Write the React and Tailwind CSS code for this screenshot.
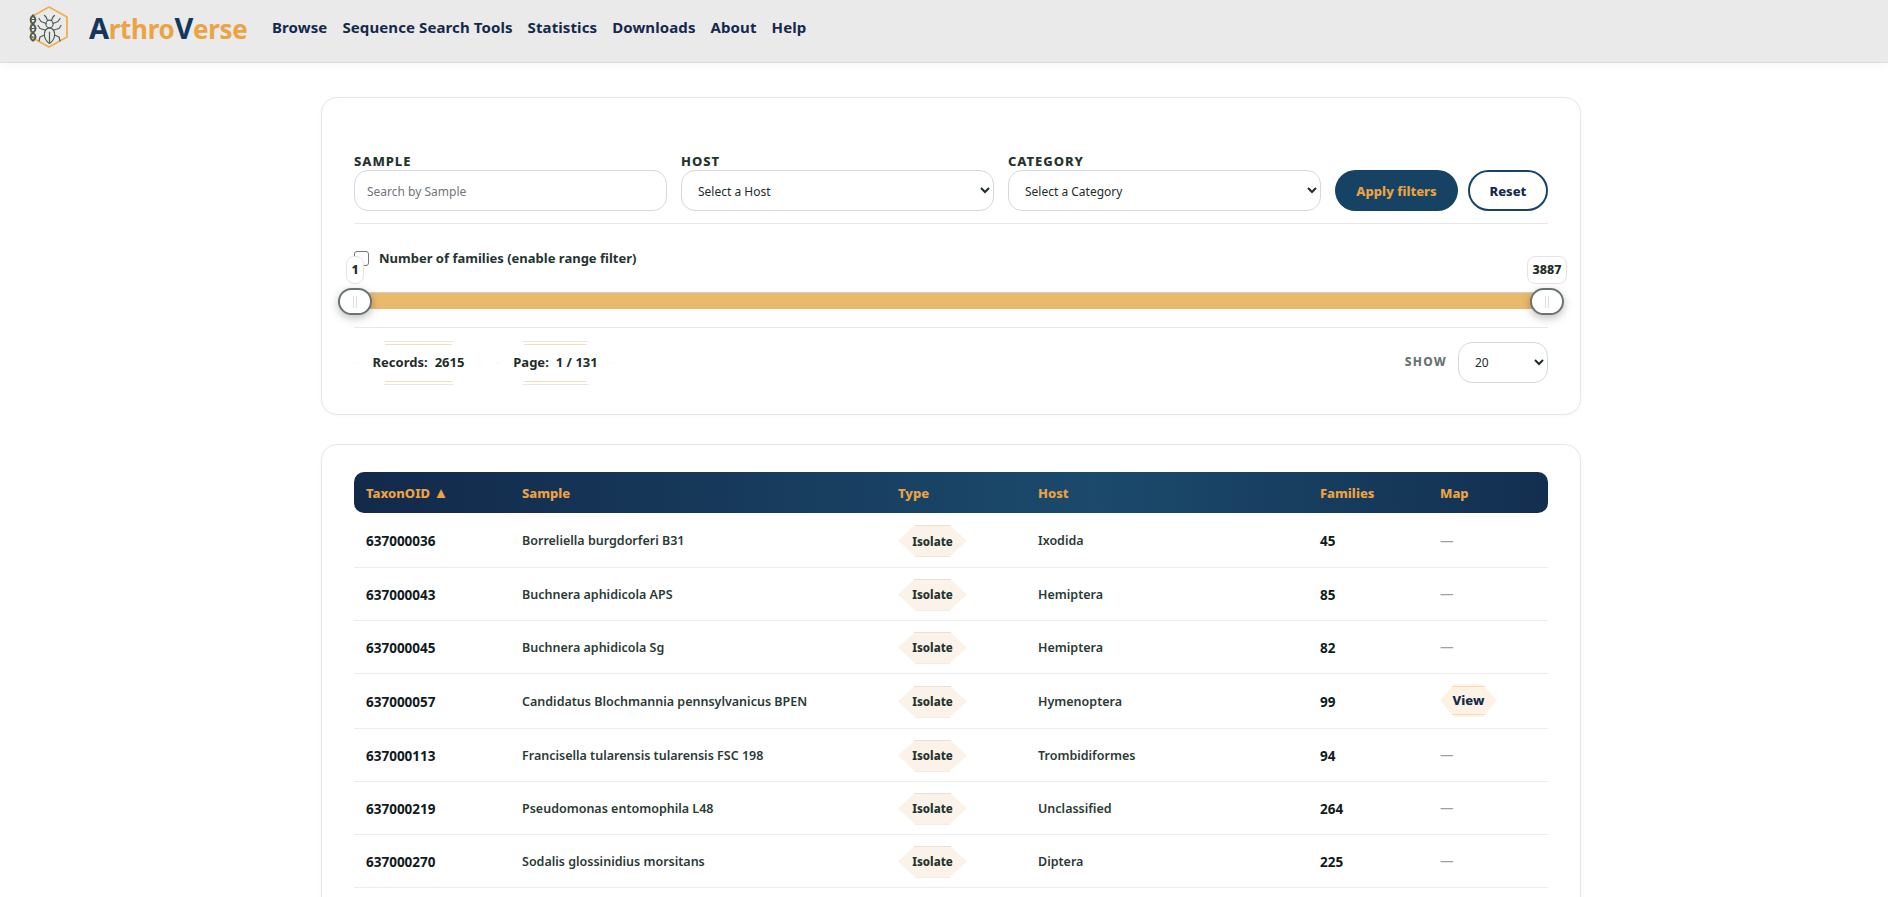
const rows = [
  ["637000036", "Borreliella burgdorferi B31", "Ixodida", "45", false, "h-[54px]"],
  ["637000043", "Buchnera aphidicola APS", "Hemiptera", "85", false, "h-[53px]"],
  ["637000045", "Buchnera aphidicola Sg", "Hemiptera", "82", false, "h-[53px]"],
  ["637000057", "Candidatus Blochmannia pennsylvanicus BPEN", "Hymenoptera", "99", true, "h-[55px]"],
  ["637000113", "Francisella tularensis tularensis FSC 198", "Trombidiformes", "94", false, "h-[53px]"],
  ["637000219", "Pseudomonas entomophila L48", "Unclassified", "264", false, "h-[53px]"],
  ["637000270", "Sodalis glossinidius morsitans", "Diptera", "225", false, "h-[53px]"],
];
const hex = "[clip-path:polygon(25%_0,75%_0,100%_50%,75%_100%,25%_100%,0_50%)]";
const hexStat = "[clip-path:polygon(23%_0,77%_0,100%_50%,77%_100%,23%_100%,0_50%)]";

function Logo() {
  return (
    <svg width="50" height="46" viewBox="0 0 50 46" fill="none" className="block">
      <path d="M24 2 L42 12 L42 32 L24 42 L6 32 L6 12 Z" stroke="#eeb055" strokeWidth="1.8" strokeLinejoin="round" />
      <g stroke="#4f5a55" strokeWidth="1.2" strokeLinecap="round" strokeLinejoin="round">
        <path d="M24.5 23 C20 23 19 28 19.5 31 C20 35 23 37.5 24.5 38.5 C26 37.5 29 35 29.5 31 C30 28 29 23 24.5 23 Z" fill="#eaeaea" />
        <ellipse cx="24.5" cy="19" rx="3.6" ry="3.8" fill="#eaeaea" />
        <path d="M22.5 15.5 L21 12 L19.5 10.5 M26.5 15.5 L28 12 L29.5 10.5 M21 18.5 L16 16.5 L14 13.5 M28 18.5 L33 16.5 L35 13.5 M20 25 L15 23.5 L13 20.5 M29 25 L34 23.5 L36 20.5 M19.5 30 L15 32 L14 36 M29.5 30 L34 32 L35 36 M24.5 27 V37" />
      </g>
      <g stroke="#4f5a55" fill="none">
        <path d="M7 10 C11.5 13 11.5 16 8 19 C4.5 22 4.5 25 8 28 C11.5 30 11.5 33 8 36" strokeWidth="1.8" />
        <path d="M9 10 C4.5 13 4.5 16 8 19 C11.5 22 11.5 25 8 28 C4.5 30 4.5 33 8 36" strokeWidth="1.8" />
        <path d="M6 14.5 H10.5 M6 23.5 H10.5 M6 32 H10.5" strokeWidth="1" />
      </g>
    </svg>
  );
}

function StatHex({ label, value, cls, innerCls }) {
  return (
    <div className={`${cls} h-11 translate-y-px ${hexStat} border border-[#e6e6e6] flex items-center justify-center`}>
      <div className={`${innerCls} h-[38px] ${hexStat} border border-[#fbdcb0] flex items-center justify-center gap-[7px] text-[13px] font-bold text-[#1f2d2a] whitespace-nowrap`}>
        <span>{label}</span>
        <span>{value}</span>
      </div>
    </div>
  );
}

function Thumb({ cls }) {
  return (
    <div className={`absolute top-[-5px] ${cls} w-[34px] h-[27px] rounded-full border-2 border-[#6b7371] bg-white shadow-[0_3px_8px_rgba(0,0,0,0.25)] flex items-center justify-center gap-[2px]`}>
      <span className="w-px h-3 bg-[#dddddd]" />
      <span className="w-px h-3 bg-[#dddddd]" />
    </div>
  );
}

export default function App() {
  const field = "h-[41px] w-full rounded-[14px] border border-[#d5d8dc] bg-white px-[12px] pt-[2px] text-[12px] text-[#1f2d2a] outline-none";
  const label = "block text-[13px] leading-[17px] font-extrabold tracking-[0.95px] text-[#26332f]";
  const th = "px-3 pt-[2px] text-left font-extrabold text-[13px] text-[#eca344]";
  const td = "px-3 text-[13.5px] font-bold";
  const tdText = "px-3 pt-[3px] text-[13.5px] font-bold text-[#111a1c]";
  const tdName = "px-3 pt-[4px] text-[12.5px] font-semibold text-[#2b3a36]";
  return (
    <div className="h-[897px] overflow-hidden bg-white font-['Noto_Sans','Open_Sans',sans-serif]">
      <header className="h-[63px] bg-[#eaeaea] border-b border-[#dcdce4] shadow-[0_2px_10px_rgba(0,0,0,0.04)] flex items-center pl-[25px] pb-[6px]">
        <Logo />
        <div className="ml-[14px] mb-[2px] text-[26px] leading-none font-bold tracking-[-0.3px] text-[#eca344] w-[183px]">
          <span className="text-[#14365c] text-[29px]">A</span>rthro<span className="text-[#14365c] text-[29px]">V</span>erse
        </div>
        <nav className="flex gap-[15px] mb-[2px] text-[15px] tracking-[0.1px] font-bold text-[#14294b]">
          <span>Browse</span>
          <span>Sequence Search Tools</span>
          <span>Statistics</span>
          <span>Downloads</span>
          <span>About</span>
          <span>Help</span>
        </nav>
      </header>

      <main className="w-[1260px] ml-[321px] pt-[34px] flex flex-col gap-[29px]">
        <section className="h-[318px] rounded-[16px] border border-[#e4e7ee] bg-white px-[32px] pt-[55px] shadow-[0_1px_4px_rgba(0,0,0,0.03)]">
          <div className="flex items-end gap-[14px] pb-[12px] border-b border-[#e8e8e8]">
            <label className="w-[313px] block">
              <span className={label}>SAMPLE</span>
              <input placeholder="Search by Sample" className={`${field} placeholder:text-[#70757a]`} />
            </label>
            <label className="w-[313px] block">
              <span className={label}>HOST</span>
              <select className={field}><option>Select a Host</option></select>
            </label>
            <label className="w-[313px] block">
              <span className={label}>CATEGORY</span>
              <select className={field}><option>Select a Category</option></select>
            </label>
            <button className="w-[123px] h-[41px] pt-[2px] rounded-full bg-[#164263] text-[#eca344] text-[13px] font-extrabold">Apply filters</button>
            <button className="ml-[-4px] w-[80px] h-[41px] pt-[2px] rounded-full border-2 border-[#164263] bg-white text-[#14294b] text-[13px] font-extrabold">Reset</button>
          </div>

          <div className="flex items-center gap-[10px] mt-[26px] h-[17px] relative">
            <input type="checkbox" className="w-[15px] h-[15px] appearance-none rounded-[3px] border border-[#777777] bg-white" />
            <span className="text-[13px] font-bold text-[#26332f]">Number of families (enable range filter)</span>
            <div className="absolute left-[-8px] top-[6px] w-[18px] h-[28px] rounded-[8px] border border-[#e4e4e4] bg-white flex items-center justify-center text-[12.5px] font-extrabold text-[#1f2d2a]">1</div>
            <div className="absolute right-[-19px] top-[6px] w-[40px] h-[28px] rounded-[8px] border border-[#e4e4e4] bg-white flex items-center justify-center text-[12.5px] font-extrabold text-[#1f2d2a]">3887</div>
          </div>

          <div className="relative h-[17px] mt-[25px] bg-[#e9b96e] border-t border-[#cfcfcf]">
            <Thumb cls="left-[-16px]" />
            <Thumb cls="right-[-16px]" />
          </div>

          <div className="mt-[18px] pt-[12px] border-t border-[#e8e8e8] flex items-center">
            <StatHex label="Records:" value="2615" cls="w-[127px] ml-px" innerCls="w-[121px]" />
            <StatHex label="Page:" value="1 / 131" cls="w-[119px] ml-[14px]" innerCls="w-[113px]" />
            <span className="ml-auto text-[12px] font-extrabold tracking-[1.2px] text-[#6b7371]">SHOW</span>
            <select className="ml-[11px] w-[90px] h-[41px] rounded-[14px] border border-[#d5d8dc] bg-white pl-[12px] text-[12px] text-[#1f2d2a]"><option>20</option></select>
          </div>
        </section>

        <section className="h-[600px] rounded-[16px] border border-[#e4e7ee] bg-white px-[32px] pt-[27px] shadow-[0_1px_4px_rgba(0,0,0,0.03)]">
          <table className="w-full table-fixed border-collapse">
            <thead>
              <tr className="h-[41px] bg-[linear-gradient(90deg,#12294a_0%,#1b4a6c_62%,#132f50_100%)] [clip-path:inset(0_round_10px)]">
                <th className={`${th} w-[156px]`}>TaxonOID <span className="text-[15px] leading-none">▲</span></th>
                <th className={`${th} w-[376px]`}>Sample</th>
                <th className={`${th} w-[140px]`}>Type</th>
                <th className={`${th} w-[282px]`}>Host</th>
                <th className={`${th} w-[120px]`}>Families</th>
                <th className={th}>Map</th>
              </tr>
            </thead>
            <tbody>
              {rows.map(([id, sample, host, fam, view, h]) => (
                <tr key={id} className={`${h} border-b border-[#ececec]`}>
                  <td className={tdText}>{id}</td>
                  <td className={tdName}>{sample}</td>
                  <td className={`${td} pt-[2px]`}>
                    <div className={`w-[69px] h-8 ${hex} bg-[#fbf3e9] border-y border-[#ecdfd0] pt-px flex items-center justify-center text-[11.5px] font-extrabold text-[#26332f]`}>Isolate</div>
                  </td>
                  <td className={tdName}>{host}</td>
                  <td className={tdText}>{fam}</td>
                  {view ? (
                    <td className={td}>
                      <div className={`w-[57px] h-[33px] ${hex} bg-[#fdf2e6] flex items-center justify-center`}>
                        <div className="w-full h-[29px] border-y border-[#fbdcb2] flex items-center justify-center text-[13px] font-extrabold text-[#14294b]">View</div>
                      </div>
                    </td>
                  ) : (
                    <td className={`${td} pt-[2px]`}>
                      <span className="font-normal text-[#9aa3a3]">—</span>
                    </td>
                  )}
                </tr>
              ))}
            </tbody>
          </table>
        </section>
      </main>
    </div>
  );
}
